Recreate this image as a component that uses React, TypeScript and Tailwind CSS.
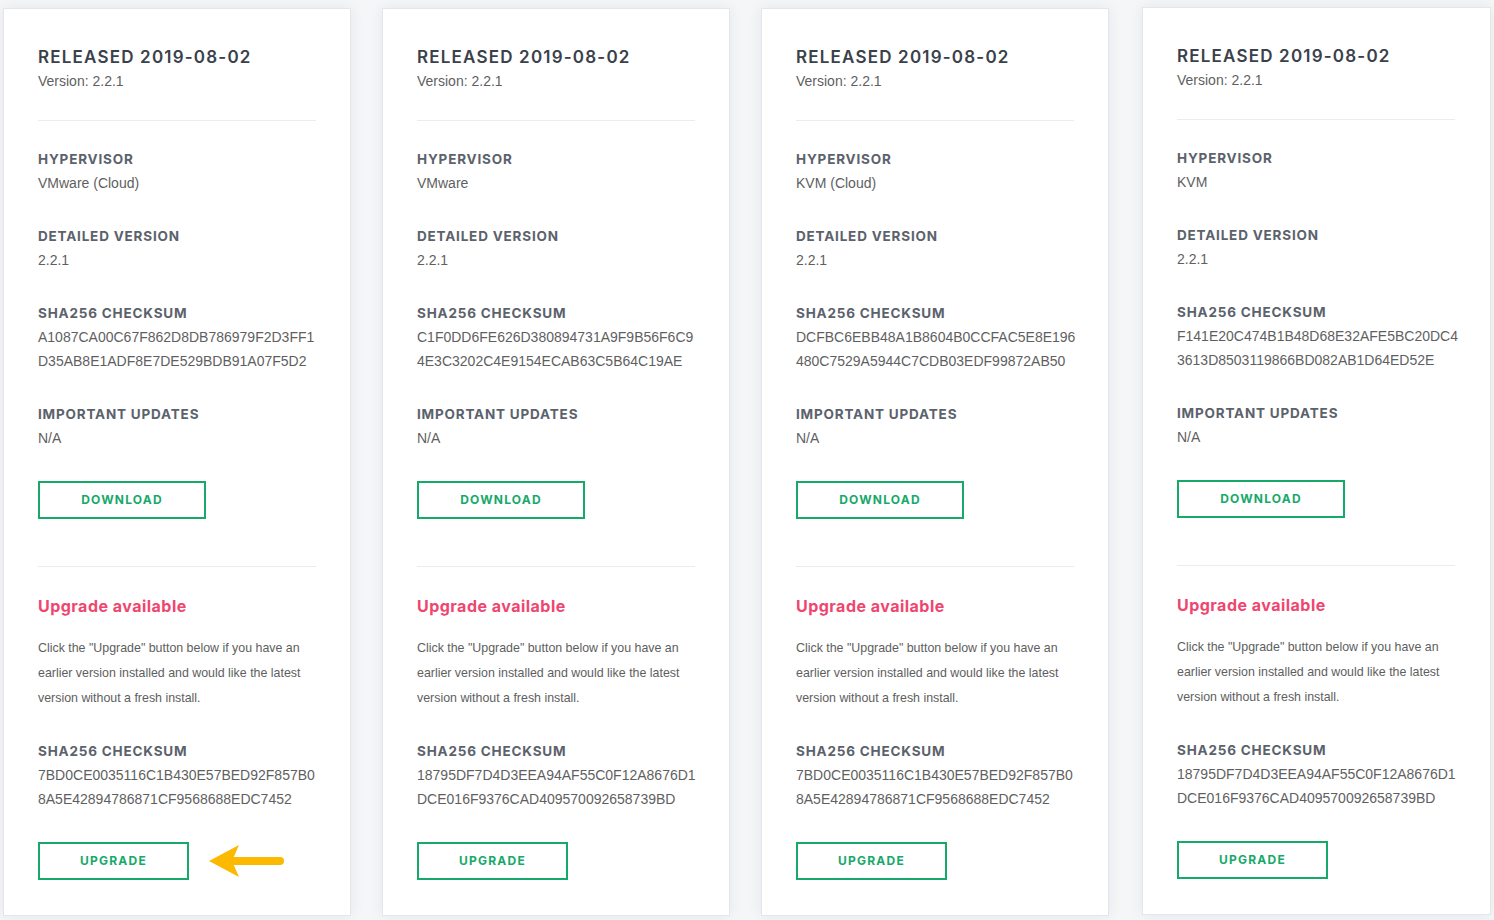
import React from 'react';

const releases = [
  {
    hypervisor: 'VMware (Cloud)',
    checksum: ['A1087CA00C67F862D8DB786979F2D3FF1', 'D35AB8E1ADF8E7DE529BDB91A07F5D2'],
    upgradeChecksum: ['7BD0CE0035116C1B430E57BED92F857B0', '8A5E42894786871CF9568688EDC7452'],
    arrow: true,
  },
  {
    hypervisor: 'VMware',
    checksum: ['C1F0DD6FE626D380894731A9F9B56F6C9', '4E3C3202C4E9154ECAB63C5B64C19AE'],
    upgradeChecksum: ['18795DF7D4D3EEA94AF55C0F12A8676D1', 'DCE016F9376CAD409570092658739BD'],
  },
  {
    hypervisor: 'KVM (Cloud)',
    checksum: ['DCFBC6EBB48A1B8604B0CCFAC5E8E196', '480C7529A5944C7CDB03EDF99872AB50'],
    upgradeChecksum: ['7BD0CE0035116C1B430E57BED92F857B0', '8A5E42894786871CF9568688EDC7452'],
  },
  {
    hypervisor: 'KVM',
    checksum: ['F141E20C474B1B48D68E32AFE5BC20DC4', '3613D8503119866BD082AB1D64ED52E'],
    upgradeChecksum: ['18795DF7D4D3EEA94AF55C0F12A8676D1', 'DCE016F9376CAD409570092658739BD'],
    last: true,
  },
];

const label = "text-[13.5px] leading-[24px] font-bold tracking-[0.06em] text-[#5b626c] font-['Inter',sans-serif]";
const value = "text-[14px] leading-[24px] text-[#5f5f5f] font-['Liberation_Sans',Arial,sans-serif]";

function Arrow() {
  return (
    <svg width="76" height="34" viewBox="0 0 76 34">
      <polygon points="0,17 30,1 23,17 30,33" fill="#fbb900" />
      <line x1="24" y1="17" x2="71" y2="17" stroke="#fbb900" strokeWidth="8" strokeLinecap="round" />
    </svg>
  );
}

function Card({ item }: { item: (typeof releases)[number] }) {
  return (
    <div
      className={`shrink-0 bg-white border border-[#e4e6ea] shadow-[0_0_14px_rgba(20,30,50,0.07)] pt-[36px] pb-[35px] px-[34px] ${
        item.last ? '-mt-px ml-[2px] w-[349px]' : 'w-[348px]'
      }`}
    >
      <h2 className="text-[17px] leading-[24px] font-semibold tracking-[0.07em] text-[#3a414b] font-['Inter',sans-serif]">
        RELEASED 2019-08-02
      </h2>
      <p className={value}>Version: 2.2.1</p>
      <div className="mt-[27px] h-px w-[278px] bg-[#ebecee]" />

      <div className="mt-[26px]">
        <p className={label}>HYPERVISOR</p>
        <p className={value}>{item.hypervisor}</p>
      </div>
      <div className="mt-[29px]">
        <p className={label}>DETAILED VERSION</p>
        <p className={value}>2.2.1</p>
      </div>
      <div className="mt-[29px]">
        <p className={label}>SHA256 CHECKSUM</p>
        {item.checksum.map((c) => (
          <p key={c} className={value}>{c}</p>
        ))}
      </div>
      <div className="mt-[29px]">
        <p className={label}>IMPORTANT UPDATES</p>
        <p className={value}>N/A</p>
      </div>

      <button className="mt-[31px] w-[168px] h-[38px] border-2 border-[#17a96a] text-[#17a96a] text-[12px] font-bold tracking-[0.1em] font-['Inter',sans-serif]">
        DOWNLOAD
      </button>

      <div className="mt-[47px] h-px w-[278px] bg-[#ebecee]" />

      <h3 className="mt-[27px] text-[16px] leading-[24px] font-bold tracking-[0.03em] text-[#ef4670] font-['Inter',sans-serif]">
        Upgrade available
      </h3>
      <p className="mt-[18px] text-[12.4px] leading-[25px] text-[#5e5e5e] font-['Liberation_Sans',Arial,sans-serif]">
        Click the "Upgrade" button below if you have an earlier version installed and would like the latest version
        without a fresh install.
      </p>

      <div className="mt-[28px]">
        <p className={label}>SHA256 CHECKSUM</p>
        {item.upgradeChecksum.map((c) => (
          <p key={c} className={value}>{c}</p>
        ))}
      </div>

      <div className="mt-[31px] flex items-center gap-[20px]">
        <button className="w-[151px] h-[38px] border-2 border-[#17a96a] text-[#17a96a] text-[12px] font-bold tracking-[0.1em] font-['Inter',sans-serif]">
          UPGRADE
        </button>
        {item.arrow && <Arrow />}
      </div>
    </div>
  );
}

export default function App() {
  return (
    <div className="w-[1494px] h-[920px] overflow-hidden bg-[#f5f6f8]">
      <div className="flex items-start gap-[31px] pl-[3px] pt-[8px]">
        {releases.map((item, i) => (
          <Card key={i} item={item} />
        ))}
      </div>
    </div>
  );
}
